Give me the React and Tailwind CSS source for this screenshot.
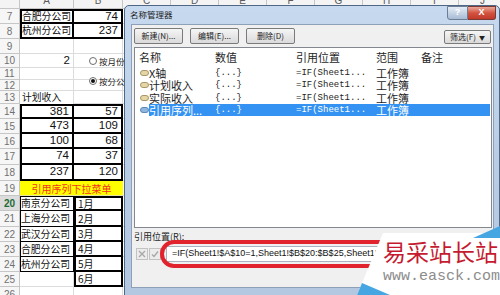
import React from 'react'

const CJK = "font-['Noto_Sans_CJK_SC','Noto_Sans',sans-serif]"
const GRID = 'border-r border-b border-[#dadcdd]'
const TA_TOP = 'border-2 border-black'
const TB_TOP = 'border-t-2 border-r-2 border-b-2 border-black'
const TA = 'border-l-2 border-r-2 border-b-2 border-black'
const TB = 'border-r-2 border-b-2 border-black'
const NA_TOP = 'border border-black'
const NA = 'border-l border-r border-b border-black'
const MB_TOP = 'border-2 border-black'
const MB = 'border-l-2 border-r-2 border-b-2 border-black'

const rows = [
  { n: 7, h: 'h-[15px]', a: '合肥分公司', aCls: TA_TOP, b: '74', bCls: TB_TOP },
  { n: 8, h: 'h-[15px]', a: '杭州分公司', aCls: TA, b: '237', bCls: TB },
  { n: 9, h: 'h-[15px]' },
  { n: 10, h: 'h-[14px]', a: '2', num: true },
  { n: 11, h: 'h-[12px]' },
  { n: 12, h: 'h-[11px]' },
  { n: 13, h: 'h-[13px]', a: '计划收入', aCls: 'border-r border-[#dadcdd] pl-[2px]' },
  { n: 14, h: 'h-[15px]', a: '381', num: true, aCls: TA_TOP, b: '57', bCls: TB_TOP },
  { n: 15, h: 'h-[15px]', a: '473', num: true, aCls: TA, b: '109', bCls: TB },
  { n: 16, h: 'h-[15px]', a: '100', num: true, aCls: TA, b: '68', bCls: TB },
  { n: 17, h: 'h-[16px]', a: '74', num: true, aCls: TA, b: '37', bCls: TB },
  { n: 18, h: 'h-[16px]', a: '237', num: true, aCls: TA, b: '120', bCls: TB },
  { n: 19, h: 'h-[15px]', merged: '引用序列下拉菜单' },
  { n: 20, h: 'h-[15px]', a: '南京分公司', aCls: NA_TOP, b: '1月', bCls: MB_TOP, bText: true, active: true },
  { n: 21, h: 'h-[16px]', a: '上海分公司', aCls: NA, b: '2月', bCls: MB, bText: true },
  { n: 22, h: 'h-[15px]', a: '武汉分公司', aCls: NA, b: '3月', bCls: MB, bText: true },
  { n: 23, h: 'h-[15px]', a: '合肥分公司', aCls: NA, b: '4月', bCls: MB, bText: true },
  { n: 24, h: 'h-[15px]', a: '杭州分公司', aCls: NA, b: '5月', bCls: MB, bText: true },
  { n: 25, h: 'h-[15px]', b: '6月', bCls: MB, bText: true },
  { n: 26, h: 'h-[15px]' },
]

const cols = ['C', 'D', 'E', 'F', 'G', 'H', 'I', 'J']

function Sheet() {
  return (
    <div className={`text-[#111] ${CJK}`}>
      <div className="flex h-[9px] overflow-hidden bg-[#f4f4f4] border-b border-[#c6c6c6]">
        <div className="w-[20px] shrink-0 border-r border-[#c6c6c6]" />
        {[['A', 'w-[54px]'], ['B', 'w-[49px]']].concat(cols.map(c => [c, 'w-[48px]'])).map(([c, w]) => (
          <div key={c} className={`${w} shrink-0 flex items-end justify-center border-r border-[#c6c6c6]`}>
            <span className="text-[10px] leading-[10px] mb-[2px] text-[#5a5a5a] font-['Liberation_Sans',sans-serif]">{c}</span>
          </div>
        ))}
      </div>
      {rows.map(r => (
        <div key={r.n} className={`flex ${r.h}`}>
          <div className={`w-[20px] shrink-0 flex items-center justify-center border-r border-b border-[#c6c6c6] text-[10px] font-['Liberation_Sans',sans-serif] ${r.active ? 'bg-[#dcdcdc] text-[#1e6b35] font-bold' : 'bg-[#f6f6f6] text-[#707070]'}`}>
            {r.n}
          </div>
          {r.merged ? (
            <div className="w-[103px] shrink-0 flex items-center justify-center bg-[#ffff00] text-[10px] text-[#f2331f] border-b border-[#e5e5a0]">
              {r.merged}
            </div>
          ) : (
            <>
              <div className={`w-[54px] shrink-0 flex items-center overflow-hidden whitespace-nowrap ${r.aCls || GRID} ${r.num ? "justify-end pr-[3px] text-[11.5px] font-['Liberation_Sans',sans-serif]" : 'text-[9.8px]'}`}>
                {r.a}
              </div>
              <div className={`w-[49px] shrink-0 flex items-center overflow-hidden whitespace-nowrap ${r.bCls || GRID} ${r.bText ? 'pl-[2px] text-[10px]' : "justify-end pr-[3px] text-[11.5px] font-['Liberation_Sans',sans-serif]"}`}>
                {r.b}
              </div>
            </>
          )}
          <div className="flex-1 border-b border-[#dadcdd]" />
        </div>
      ))}
    </div>
  )
}

function NameIcon({ sel }) {
  return (
    <svg width="9" height="6" viewBox="0 0 9 6" className="shrink-0">
      <rect x="0.5" y="0.5" width="8" height="5" rx="2.5" fill={sel ? '#8fb6dc' : '#e4d7a4'} stroke={sel ? '#5b88b8' : '#a8966a'} strokeWidth="1" />
    </svg>
  )
}

const names = [
  { n: 'X轴', h: 'h-[13px]' },
  { n: '计划收入', h: 'h-[12px]' },
  { n: '实际收入', h: 'h-[13px]' },
  { n: '引用序列...', h: 'h-[12px]', sel: true },
]

function Dialog() {
  return (
    <div className={`absolute left-[124px] top-[5px] w-[376px] h-[300px] border border-[#4f6685] rounded-t-[5px] bg-linear-to-b from-[#c6d9ee] via-[#b9cee6] to-[#b3c8e0] ${CJK}`}>
      <div className="flex h-[18px]">
        <div className="pl-[5px] pt-[3px] text-[8.5px] leading-[10px] text-[#1b1b1b]">名称管理器</div>
        <div className="ml-auto mr-[3px] flex h-[14px]">
          <div className="w-[21px] h-[14px] flex items-center justify-center border border-[#6c7d95] rounded-bl-[3px] bg-linear-to-b from-[#e4ecf5] to-[#a7bbd4] text-[9px] font-bold text-white font-['Liberation_Sans',sans-serif]">?</div>
          <div className="w-[28px] h-[14px] flex items-center justify-center border border-l-0 border-[#7a3a34] rounded-br-[3px] bg-linear-to-b from-[#e9a79a] via-[#d2533f] to-[#c0392b] text-[9px] font-bold text-white font-['Liberation_Sans',sans-serif]">X</div>
        </div>
      </div>
      <div className="ml-[6px] mr-[5px] h-[264px] bg-[#f0f0f0] border border-[#8ea0b8] px-[1px]">
        <div className="flex items-start mt-[3px]">
          {['新建(N)...', '编辑(E)...', '删除(D)'].map((t, i) => (
            <div key={t} className={`${i ? 'ml-[7px]' : 'ml-[1px]'} w-[49px] h-[16px] flex items-center justify-center border border-[#7a7a7a] rounded-[2px] bg-linear-to-b from-[#f5f5f5] to-[#dadada] text-[8px] text-[#222]`}>
              {t}
            </div>
          ))}
          <div className="ml-auto mr-[1px] mt-[2px] w-[47px] h-[14px] flex items-center justify-center gap-[3px] border border-[#7a7a7a] rounded-[2px] bg-linear-to-b from-[#f5f5f5] to-[#dadada] text-[8px] text-[#222]">
            筛选(F)<span className="text-[6px]">▼</span>
          </div>
        </div>
        <div className="mt-[3px] ml-[1px] w-[358px] h-[181px] bg-white border border-[#828790]">
          <div className="flex h-[18px] items-center text-[11px] text-[#1e1e1e]">
            <div className="w-[80px] pl-[4px]">名称</div>
            <div className="w-[81px]">数值</div>
            <div className="w-[80px]">引用位置</div>
            <div className="w-[45px]">范围</div>
            <div className="flex-1">备注</div>
          </div>
          {names.map(r => (
            <div key={r.n} className={`flex items-center ${r.h}`}>
              <div className="w-[14px] pl-[5px] flex items-center"><NameIcon sel={r.sel} /></div>
              <div className={`flex flex-1 items-center h-full mr-[1px] ${r.sel ? 'bg-[#3492f2] text-white' : 'text-[#1e1e1e]'}`}>
                <div className="w-[66px] text-[11px] leading-[12px] whitespace-nowrap">{r.n}</div>
                <div className="w-[81px] text-[9px] leading-[12px] font-['Liberation_Mono',monospace]">{'{...}'}</div>
                <div className="w-[80px] text-[9px] leading-[12px] font-['Liberation_Mono',monospace]">=IF(Sheet1...</div>
                <div className="w-[45px] text-[11px] leading-[12px]">工作簿</div>
              </div>
            </div>
          ))}
        </div>
        <div className="mt-[3px] ml-[1px] text-[9px] leading-[11px] text-[#1e1e1e]">
          引用位置(<span className="underline">R</span>):
        </div>
        <div className="flex items-center mt-[4px] ml-[3px]">
          <div className="w-[12px] h-[12px] flex items-center justify-center border border-[#c2c2c2] bg-[#ececec]">
            <svg width="8" height="8" viewBox="0 0 8 8"><path d="M1 1 L7 7 M7 1 L1 7" stroke="#a8a8a8" strokeWidth="1.4" /></svg>
          </div>
          <div className="ml-[1px] w-[12px] h-[12px] flex items-center justify-center border border-[#c2c2c2] bg-[#ececec]">
            <svg width="8" height="8" viewBox="0 0 8 8"><path d="M1 4.5 L3 6.5 L7 1.5" stroke="#a8a8a8" strokeWidth="1.4" fill="none" /></svg>
          </div>
          <div className="ml-[5px] w-[325px] h-[16px] flex items-center pl-[5px] bg-white border border-[#a9b3c0] overflow-hidden whitespace-nowrap text-[9px] text-[#111] font-['Liberation_Sans',sans-serif]">
            =IF(Sheet1!$A$10=1,Sheet1!$B$20:$B$25,Sheet1!$A$20:$A$24)
          </div>
        </div>
      </div>
    </div>
  )
}

function Radios() {
  return (
    <>
      <div className={`absolute left-[89px] top-[55px] flex items-center gap-[2px] text-[8.5px] text-[#222] ${CJK}`}>
        <span className="w-[8px] h-[8px] rounded-full border border-[#6e6e6e] bg-white" />
        按月份
      </div>
      <div className={`absolute left-[89px] top-[75px] flex items-center gap-[2px] text-[8.5px] text-[#222] ${CJK}`}>
        <span className="w-[8px] h-[8px] rounded-full border border-[#6e6e6e] bg-white flex items-center justify-center">
          <span className="w-[4px] h-[4px] rounded-full bg-[#111]" />
        </span>
        按分公司
      </div>
    </>
  )
}

function Watermark() {
  return (
    <>
      <div className="absolute left-[160px] top-[240px] w-[270px] h-[28px] rounded-full border-[4px] border-[#e1232d]" />
      <svg className="absolute left-[350px] top-[224px]" width="150" height="71" viewBox="0 0 150 71">
        <polygon points="33,9 150,9 150,71 7,71" fill="#ffffff" />
        <polygon points="123,14 150,14 150,2" fill="#45a6e2" />
        <polygon points="7,71 40,71 12,59" fill="#45a6e2" />
      </svg>
      <div className={`absolute left-[383px] top-[240px] text-[23px] leading-none text-[#c51a30] whitespace-nowrap ${CJK}`}>易采站长站</div>
      <div className="absolute left-[383px] top-[269px] text-[15px] leading-none text-[#8c8c8c] whitespace-nowrap font-['Liberation_Mono',monospace]">www.easck.com</div>
    </>
  )
}

export default function App() {
  return (
    <div className="relative w-[500px] h-[295px] overflow-hidden bg-white">
      <Sheet />
      <Radios />
      <Dialog />
      <Watermark />
    </div>
  )
}
